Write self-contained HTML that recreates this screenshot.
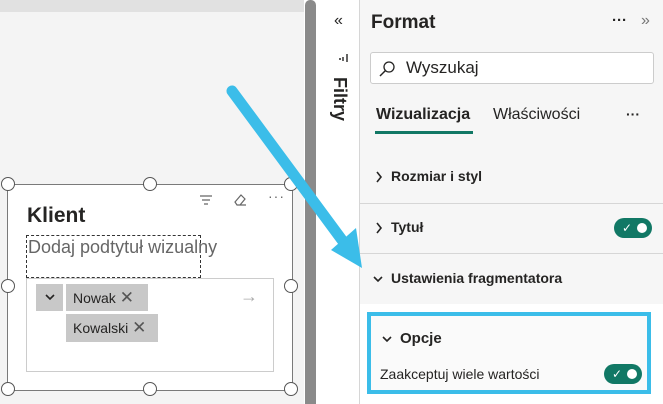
<!DOCTYPE html>
<html><head><meta charset="utf-8"><style>
body{margin:0;width:663px;height:404px;overflow:hidden;position:relative;font-family:"Liberation Sans",sans-serif;background:#fff;color:#252423}
.abs{position:absolute}
.tog{position:absolute;width:38px;height:20px;border-radius:10px;background:#117865}
.tog::after{content:"";position:absolute;right:5px;top:5px;width:10px;height:10px;border-radius:50%;background:#fff}
.tog span{position:absolute;left:8px;top:3px;color:#fff;font-size:12px;line-height:14px}
.h{position:absolute;width:12px;height:12px;border:1px solid #555;border-radius:50%;background:#fff}
</style></head><body>
<div class="abs" style="left:0;top:0;width:304px;height:404px;background:#f4f4f4"></div>
<div class="abs" style="left:0;top:0;width:304px;height:12px;background:#e1e1e1"></div>
<div class="abs" style="left:305px;top:0;width:11px;height:404px;background:#8a8a8a;border-radius:5px 5px 0 0"></div>
<div class="abs" style="left:7px;top:184px;width:284px;height:205px;border:1px solid #7a7a7a;background:#fff"></div>
<div class="abs" style="left:198px;top:192px;font-size:14px;color:#666">
<svg width="16" height="12" style="position:absolute;left:0;top:2px"><path d="M2 2h12M4 6h8M6 10h4" stroke="#666" stroke-width="1.2"/></svg>
<svg width="16" height="16" style="position:absolute;left:34px;top:0"><path d="M3 10l6-7 4 4-5 6H5zM6 13h8" stroke="#666" fill="none" stroke-width="1.2"/></svg>
<span style="position:absolute;left:70px;top:-4px;letter-spacing:1px">···</span></div>
<div class="abs" style="left:27px;top:204px;font-size:21px;font-weight:bold;color:#252423">Klient</div>
<div class="abs" style="left:26px;top:235px;width:173px;height:41px;border:1px dashed #333"></div>
<div class="abs" style="left:28px;top:237px;font-size:18px;color:#666">Dodaj podtytuł wizualny</div>
<div class="abs" style="left:26px;top:278px;width:246px;height:92px;border:1px solid #ccc"></div>
<div class="abs" style="left:36px;top:284px;width:27px;height:27px;background:#c8c8c8;text-align:center"><svg width="12" height="27"><path d="M2 11l4 4 4-4" stroke="#252423" stroke-width="1.6" fill="none"/></svg></div>
<div class="abs" style="left:66px;top:284px;width:82px;height:27px;background:#c8c8c8;font-size:14px;line-height:27px;padding-left:7px;box-sizing:border-box">Nowak <span style="font-size:17px;color:#555">✕</span></div>
<div class="abs" style="left:66px;top:314px;width:92px;height:28px;background:#c8c8c8;font-size:14px;line-height:28px;padding-left:7px;box-sizing:border-box">Kowalski <span style="font-size:17px;color:#555">✕</span></div>
<div class="abs" style="left:240px;top:286px;font-size:18px;color:#aaa">→</div>
<div class="h" style="left:1px;top:177px"></div><div class="h" style="left:143px;top:177px"></div><div class="h" style="left:284px;top:177px"></div>
<div class="h" style="left:1px;top:279px"></div><div class="h" style="left:284px;top:279px"></div>
<div class="h" style="left:1px;top:382px"></div><div class="h" style="left:143px;top:382px"></div><div class="h" style="left:284px;top:382px"></div>
<div class="abs" style="left:318px;top:0;width:41px;height:404px;background:#fff;border-right:1px solid #d6d6d6"></div>
<div class="abs" style="left:334px;top:12px;font-size:16px">«</div>
<svg class="abs" style="left:337px;top:53px" width="12" height="10"><path d="M2 6h2M6 4v4M10 1v8" stroke="#252423" stroke-width="1.4"/></svg>
<div class="abs" style="left:329px;top:77px;font-size:18px;font-weight:bold;writing-mode:vertical-rl">Filtry</div>
<div class="abs" style="left:360px;top:0;width:303px;height:404px;background:#f6f6f6"></div>
<div class="abs" style="left:371px;top:12px;font-size:19px;font-weight:bold">Format</div>
<div class="abs" style="left:612px;top:12px;font-size:15px;font-weight:bold">···</div>
<div class="abs" style="left:641px;top:12px;font-size:16px;color:#777">»</div>
<div class="abs" style="left:370px;top:52px;width:282px;height:30px;background:#fff;border:1px solid #ccc;border-radius:3px"></div>
<svg class="abs" style="left:378px;top:60px" width="18" height="18"><circle cx="11" cy="7" r="5" stroke="#252423" fill="none" stroke-width="1.3"/><path d="M7.5 10.5L2 16" stroke="#252423" stroke-width="1.5"/></svg>
<div class="abs" style="left:406px;top:58px;font-size:17px">Wyszukaj</div>
<div class="abs" style="left:376px;top:106px;font-size:16px;font-weight:bold">Wizualizacja</div>
<div class="abs" style="left:375px;top:131px;width:98px;height:3px;background:#117865"></div>
<div class="abs" style="left:493px;top:106px;font-size:16px">Właściwości</div>
<div class="abs" style="left:626px;top:106px;font-size:14px;font-weight:bold">···</div>
<div class="abs" style="left:360px;top:203px;width:303px;height:1px;background:#d6d6d6"></div>
<div class="abs" style="left:360px;top:253px;width:303px;height:1px;background:#d6d6d6"></div>
<div class="abs" style="left:360px;top:304px;width:303px;height:100px;background:#fff"></div>
<svg class="abs" style="left:374px;top:170px" width="10" height="14"><path d="M3 2l4 5-4 5" stroke="#252423" stroke-width="1.6" fill="none"/></svg>
<div class="abs" style="left:391px;top:168px;font-size:14px;font-weight:bold">Rozmiar i styl</div>
<svg class="abs" style="left:374px;top:221px" width="10" height="14"><path d="M3 2l4 5-4 5" stroke="#252423" stroke-width="1.6" fill="none"/></svg>
<div class="abs" style="left:391px;top:219px;font-size:14px;font-weight:bold">Tytuł</div>
<div class="tog" style="left:614px;top:218px"><span>✓</span></div>
<svg class="abs" style="left:372px;top:274px" width="12" height="10"><path d="M2 3l4 4 4-4" stroke="#252423" stroke-width="1.6" fill="none"/></svg>
<div class="abs" style="left:391px;top:270px;font-size:14px;font-weight:bold">Ustawienia fragmentatora</div>
<div class="abs" style="left:367px;top:312px;width:284px;height:82px;border:4px solid #3bbde9;background:#fafafa;box-sizing:border-box"></div>
<svg class="abs" style="left:381px;top:334px" width="12" height="10"><path d="M2 3l4 4 4-4" stroke="#252423" stroke-width="1.6" fill="none"/></svg>
<div class="abs" style="left:400px;top:330px;font-size:15px;font-weight:bold">Opcje</div>
<div class="abs" style="left:380px;top:366px;font-size:14px">Zaakceptuj wiele wartości</div>
<div class="tog" style="left:604px;top:364px"><span>✓</span></div>
<svg class="abs" style="left:0;top:0" width="663" height="404">
<line x1="232" y1="91" x2="342" y2="240" stroke="#3bbde9" stroke-width="11" stroke-linecap="round"/>
<polygon points="362,268 331,250 356,228" fill="#3bbde9"/>
</svg>
</body></html>
